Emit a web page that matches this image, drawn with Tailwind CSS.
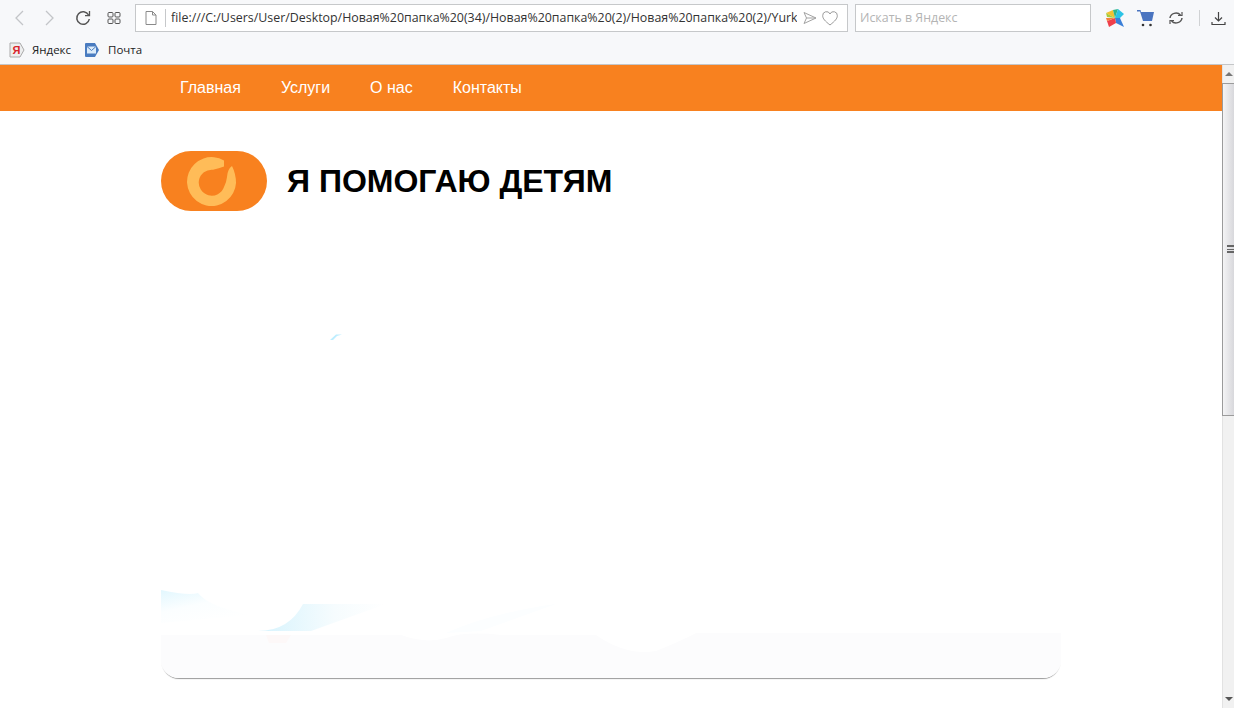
<!doctype html>
<html>

<head>
  <meta charset="UTF-8">
  <meta name="viewport" content="width=device-width, initial-scale=1.0">
  <title>Я помогаю детям</title>
  <script src="https://cdn.jsdelivr.net/npm/@tailwindcss/browser@4"></script>
</head>

<body class="bg-white h-[708px] overflow-hidden font-['Liberation_Sans',sans-serif]">

  <!-- Browser toolbar -->
  <div class="h-[65px] bg-[#f7f8fa] border-b border-[#c4c6c8] font-['Open_Sans',sans-serif]">
    <div class="h-[36px] flex items-center">
      <svg class="w-[12px] h-[16px] ml-[13px]" viewBox="0 0 12 16" fill="none" stroke="#c3c5c8" stroke-width="1.3">
        <path d="M10 1 3 8l7 7" />
      </svg>
      <svg class="w-[12px] h-[16px] ml-[19px]" viewBox="0 0 12 16" fill="none" stroke="#c3c5c8" stroke-width="1.3">
        <path d="m2 1 7 7-7 7" />
      </svg>
      <svg class="w-[16px] h-[16px] ml-[19px]" viewBox="0 0 16 16" fill="none" stroke="#555" stroke-width="1.5">
        <path d="M13.6 5A6.3 6.3 0 1 0 14.3 9" />
        <path d="M14.5 1v4.6H10" stroke-width="1.3" />
      </svg>
      <svg class="w-[14px] h-[12px] ml-[16px]" viewBox="0 0 14 12" fill="none" stroke="#555" stroke-width="1">
        <rect x="1" y="0.5" width="5" height="4.5" rx="1" />
        <rect x="8" y="0.5" width="5" height="4.5" rx="1" />
        <rect x="1" y="7" width="5" height="4.5" rx="1" />
        <rect x="8" y="7" width="5" height="4.5" rx="1" />
      </svg>

      <!-- Address bar -->
      <div class="ml-[14px] w-[713px] h-[28px] bg-white border border-[#c6c8ca] flex items-center">
        <svg class="w-[12px] h-[14px] ml-[9px] shrink-0" viewBox="0 0 12 14" fill="none" stroke="#8a8a8a">
          <path d="M1 .5h6.5l3.5 3.500v9.500H1zM7.500 .5V4H11" />
        </svg>
        <div class="w-px h-[18px] bg-[#c6c8ca] ml-[8px] shrink-0"></div>
        <div class="ml-[5px] w-[626px] shrink-0 overflow-hidden whitespace-nowrap text-[12.400px] text-[#333]">file:///C:/Users/User/Desktop/Новая%20папка%20(34)/Новая%20папка%20(2)/Новая%20папка%20(2)/Yurk</div>
        <svg class="w-[14px] h-[14px] ml-[6px] shrink-0" viewBox="0 0 14 14" fill="none" stroke="#a3a3a3">
          <path d="M1 1.500 13 7 1 12.500 3.500 7zM3.500 7H13" />
        </svg>
        <svg class="w-[16px] h-[15px] ml-[5px] shrink-0" viewBox="0 0 16 15" fill="none" stroke="#9a9a9a">
          <path d="M8 14C3 10 .7 7.700 .7 4.700A3.800 3.800 0 0 1 8 3a3.800 3.800 0 0 1 7.300 1.700C15.300 7.700 13 10 8 14z" />
        </svg>
      </div>

      <!-- Search box -->
      <div class="ml-[7px] w-[236px] h-[28px] bg-white border border-[#c6c8ca] flex items-center pl-[4px] text-[12.400px] text-[#b4b4b4]">Искать в Яндекс</div>

      <svg class="w-[18px] h-[18px] ml-[15px]" viewBox="0 0 18 18">
        <path d="M9 9 0 4 7 1z" fill="#f2c230" />
        <path d="M9 9 0 4l1 4z" fill="#a8cc3c" />
        <path d="M9 9 7 1l5-1z" fill="#2fb58a" />
        <path d="M9 9l3-9 6 5-4 4z" fill="#2cc3e6" />
        <path d="M9 9h5l4 9-8-4z" fill="#3a7fd8" />
        <path d="M9 9l1 5-7 4-2-6z" fill="#ef3f4a" />
        <path d="M9 9 1 12l-1-3z" fill="#f5803a" />
      </svg>
      <svg class="w-[17px] h-[17px] ml-[13px]" viewBox="0 0 17 17">
        <path d="M0 0h3.500l.5 2H17l-2 9H6L3 1.500H0z" fill="#4a74c0" />
        <circle cx="6" cy="15" r="1.300" fill="#333" />
        <circle cx="13.500" cy="15" r="1.300" fill="#333" />
      </svg>
      <svg class="w-[16px] h-[16px] ml-[14px]" viewBox="0 0 16 16" fill="none" stroke="#555" stroke-width="1.500">
        <path d="M2 8a6 5.500 0 0 1 10.500-3M14 8a6 5.500 0 0 1-10.500 3" />
        <path d="M10 5.500h4V2M6 10.500H2V14" stroke-width="1.200" />
      </svg>
      <div class="w-px h-[16px] bg-[#d0d2d4] ml-[15px]"></div>
      <svg class="w-[15px] h-[15px] ml-[11px]" viewBox="0 0 15 15" fill="none" stroke="#444" stroke-width="1.200">
        <path d="M7.500 1v9M4 6.500l3.500 3.500L11 6.500M1 11v2.500h13V11" />
      </svg>
    </div>

    <!-- Bookmarks -->
    <div class="h-[28px] flex items-center text-[11.500px] pb-[1px]">
      <svg class="w-[16px] h-[16px] ml-[9px]" viewBox="0 0 16 16">
        <path d="M1 1h10l4 7-4 7H1z" fill="#eee" stroke="#aaa" />
        <text x="3.500" y="12" font-size="11" font-weight="700" font-family="Liberation Sans" fill="#d8252b">Я</text>
      </svg>
      <span class="ml-[7px] text-[#222]">Яндекс</span>
      <svg class="w-[16px] h-[16px] ml-[13px]" viewBox="0 0 16 16">
        <path d="M2 1h9l4 7-4 7H2a1 1 0 0 1-1-1V2a1 1 0 0 1 1-1z" fill="#4a7cc0" />
        <rect x="3" y="4.500" width="9" height="7" fill="#dcecfa" />
        <path d="m3 4.500 4.500 4 4.500-4" fill="none" stroke="#4a7cc0" />
      </svg>
      <span class="ml-[8px] text-[#222]">Почта</span>
    </div>
  </div>

  <div class="flex h-[643px]">
    <!-- Page -->
    <div class="flex-1 min-w-0">
      <!-- Navbar -->
      <nav class="h-[46px] bg-[#f8811f] flex items-center gap-[40px] pl-[180px] text-[16px] text-white">
        <a href="#">Главная</a>
        <a href="#">Услуги</a>
        <a href="#">О нас</a>
        <a href="#">Контакты</a>
      </nav>

      <!-- Logo + title -->
      <div class="ml-[161px] mt-[40px] flex items-center gap-[20px]">
        <div class="w-[106px] h-[60px] rounded-full bg-[#f8811f]">
          <svg class="w-[106px] h-[60px]" viewBox="0 0 106 60">
            <path d="M63 9.500A24.500 24.500 0 1 0 75 32Q75 23 71 15Q66.500 18 66 26Q65.500 31 63 36A13 13 0 1 1 52 18.700Q58 17.500 63 15.500Z" fill="#ffbc58" />
          </svg>
        </div>
        <h1 class="text-[32px] leading-[60px] font-bold text-black">Я ПОМОГАЮ ДЕТЯМ</h1>
      </div>

      <!-- Hero banner, faded out -->
      <div class="ml-[161px] mt-[20px] w-[900px] h-[447px] rounded-b-[18px] overflow-hidden shadow-[0_2px_1px_-1px_rgba(0,0,0,0.4)]">
        <svg class="block w-[900px] h-[447px]" viewBox="0 0 900 447">
          <defs>
            <linearGradient id="blueA" x1="0" y1="0" x2="1" y2="0">
              <stop offset="0" stop-color="#d6f3fd" />
              <stop offset="0.600" stop-color="#f6fcfe" />
              <stop offset="1" stop-color="#ffffff" />
            </linearGradient>
            <linearGradient id="blueB" x1="0" y1="0" x2="0.600" y2="1">
              <stop offset="0" stop-color="#e2f7fe" />
              <stop offset="0.500" stop-color="#fbfeff" />
              <stop offset="1" stop-color="#ffffff" />
            </linearGradient>
          </defs>
          <path d="M169 109 175 103.500H181L176 105 172 109z" fill="#bdeeff" />
          <path d="M0 359Q28 365 37 362Q48 376 90 384L0 392z" fill="url(#blueB)" />
          <path d="M142 373H225L150 400H97Q128 400 142 373z" fill="url(#blueA)" />
          <path d="M285 402Q330 382 395 373L320 400z" fill="#fcfeff" />
          <path d="M0 404H240Q265 413 285 407Q305 400 340 404H435Q465 425 495 420Q520 410 535 402H900V447H0z" fill="#fcfcfd" />
          <path d="M105 404H130L125 412H108z" fill="#fdf8f8" />
        </svg>
      </div>
    </div>

    <!-- Scrollbar -->
    <div class="w-[12px] bg-[#f1f1f1] border-l border-[#e2e2e2] flex flex-col">
      <div class="h-[18px] flex items-center justify-center">
        <div class="w-0 h-0 border-x-[4px] border-x-transparent border-b-[4px] border-b-[#777]"></div>
      </div>
      <div class="h-[333px] -ml-[1px] border border-[#9b9b9b] border-r-0 bg-gradient-to-r from-[#f4f4f5] to-[#d8d8dc] flex items-center justify-end">
        <div class="w-[7px] h-[8px] mb-[1px] border-y-2 border-[#666] flex items-center">
          <div class="w-full h-[1px] bg-[#666]"></div>
        </div>
      </div>
      <div class="flex-1"></div>
      <div class="h-[18px] flex items-center justify-center">
        <div class="w-0 h-0 border-x-[4px] border-x-transparent border-t-[4px] border-t-[#555]"></div>
      </div>
    </div>
  </div>

</body>

</html>
